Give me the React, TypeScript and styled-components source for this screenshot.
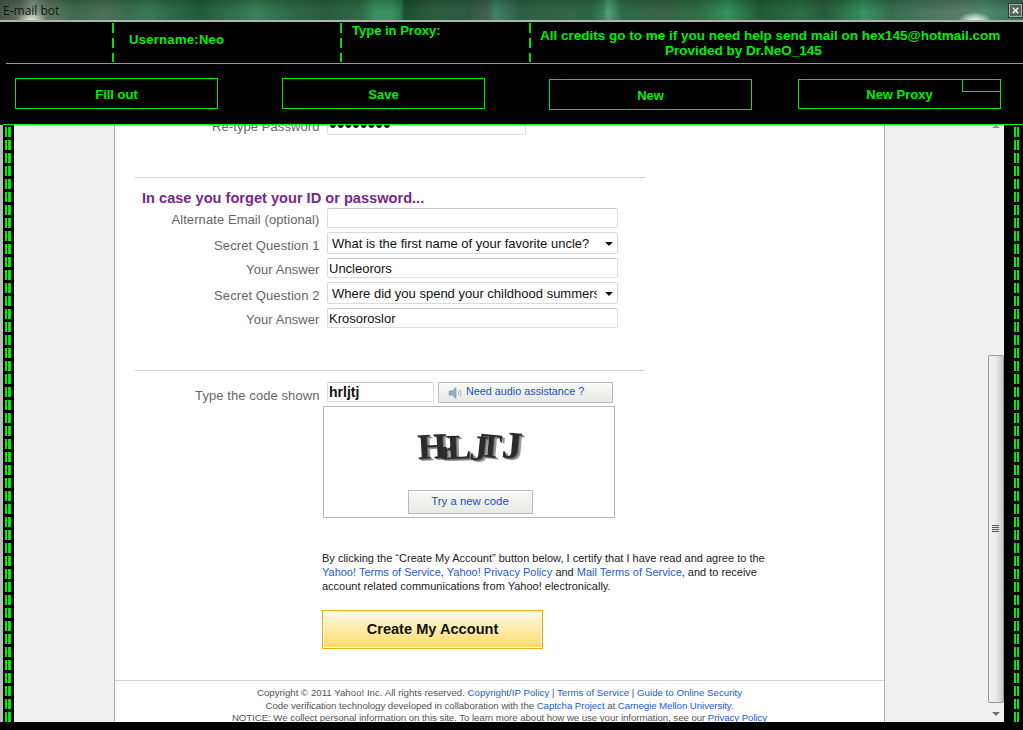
import React from "react";
import styled, { createGlobalStyle } from "styled-components";
import { X } from "lucide-react";

const GlobalStyle = createGlobalStyle`
  html, body {
    margin: 0;
    padding: 0;
    background: #000;
  }
  * {
    box-sizing: border-box;
  }
`;

const green = "#00f000";

const Frame = styled.div`
  width: 1023px;
  height: 730px;
  display: flex;
  flex-direction: column;
  overflow: hidden;
  background: #000;
  font-family: "Liberation Sans", Arial, sans-serif;
`;

const TitleBar = styled.div`
  height: 22px;
  flex: none;
  display: flex;
  align-items: flex-start;
  justify-content: space-between;
  border-bottom: 2px solid #a9b8ad;
  background:
    radial-gradient(ellipse 16px 9px at 31px 20px, rgba(255, 255, 255, 0.75), transparent),
    radial-gradient(ellipse 17px 9px at 975px 21px, #fff, rgba(255, 255, 255, 0.5) 55%, transparent),
    linear-gradient(to bottom, rgba(10, 40, 25, 0.28), transparent 55%),
    linear-gradient(
      to right,
      #4a5448 0,
      #5d6b5e 20px,
      #8a9a8c 32px,
      #5e7664 48px,
      #3f6a4c 75px,
      #4d7058 105px,
      #3c6c50 128px,
      #367a58 150px,
      #2d6a49 170px,
      #215c3b 200px,
      #2f7050 232px,
      #3a8059 256px,
      #2f6c4c 285px,
      #2c5a40 325px,
      #2f6a45 360px,
      #3a9062 375px,
      #389060 392px,
      #2e7d55 400px,
      #1d4d30 405px,
      #2c5c40 430px,
      #2f5a42 470px,
      #44604e 488px,
      #43806a 495px,
      #2e5f44 520px,
      #356548 570px,
      #2a6344 590px,
      #358058 603px,
      #52a07a 608px,
      #2f6a48 622px,
      #3a6248 665px,
      #2d6f46 700px,
      #359060 728px,
      #1f5c38 760px,
      #2c6d48 800px,
      #2a5a3c 825px,
      #2f8a5c 860px,
      #3a9265 862px,
      #346f50 890px,
      #4c7560 925px,
      #5a7d68 960px,
      #4c8a6c 985px,
      #3c6e54 1023px
    );
`;

const TitleText = styled.span`
  padding: 3px 0 0 3px;
  font-family: "Open Sans", sans-serif;
  font-size: 12px;
  line-height: 15px;
  color: #10180f;
`;

const CloseButton = styled.div`
  width: 15px;
  height: 15px;
  margin-top: 3px;
  display: flex;
  align-items: center;
  justify-content: center;
  background: #54665a;
  border: 1px solid #2c3a30;
  box-shadow: inset 0 0 0 1px #a6b4aa;
  color: #fff;
`;

const Header = styled.header`
  flex: none;
  height: 103px;
  margin-left: 3px;
  display: flex;
  flex-direction: column;
  background: #000;
  border-bottom: 1px solid #00ff00;
`;

const InfoRow = styled.div`
  height: 42px;
  flex: none;
  margin-left: 3px;
  display: flex;
  border-bottom: 1px solid #00ff00;
`;

const InfoCell = styled.div<{ $width: number; $divided?: boolean }>`
  width: ${(p) => p.$width}px;
  height: 40px;
  flex: none;
  color: ${green};
  font-size: 13px;
  font-weight: bold;
  line-height: 15px;
  background-image: ${(p) =>
    p.$divided
      ? "repeating-linear-gradient(to bottom, #00e000 0 10px, transparent 10px 15px)"
      : "none"};
  background-size: 2px 100%;
  background-repeat: no-repeat;
  background-position: 0 1px;
`;

const Username = styled.div`
  padding: 10px 0 0 17px;
  letter-spacing: 0.3px;
`;

const ProxyLabel = styled.div`
  padding: 1px 0 0 12px;
`;

const Credits = styled.div`
  padding: 6px 0 0 11px;
  white-space: nowrap;
  font-size: 13.5px;
`;

const CreditsLine = styled.div<{ $indent?: number }>`
  margin-left: ${(p) => p.$indent ?? 0}px;
`;

const ButtonRow = styled.div`
  display: flex;
  align-items: flex-start;
  padding: 14px 0 0 12px;
`;

const HeaderButton = styled.button<{ $gap?: number; $low?: boolean }>`
  position: relative;
  width: 203px;
  height: 31px;
  padding: 2px 0 0;
  margin-left: ${(p) => p.$gap ?? 0}px;
  margin-top: ${(p) => (p.$low ? 1 : 0)}px;
  background: #000;
  border: 1px solid #00e800;
  color: ${green};
  font-family: inherit;
  font-size: 13px;
  font-weight: bold;
`;

const ProxyButton = styled(HeaderButton)`
  height: 30px;
  padding: 0;
`;

const ButtonTab = styled.span`
  position: absolute;
  top: 0;
  right: 0;
  width: 38px;
  height: 12px;
  border-left: 1px solid #00e800;
  border-bottom: 1px solid #00e800;
`;

const Workspace = styled.div`
  height: 597px;
  flex: none;
  display: flex;
`;

const Rail = styled.div<{ $width: number; $inset: number; $edge?: boolean }>`
  width: ${(p) => p.$width}px;
  flex: none;
  display: flex;
  gap: 1px;
  padding-left: ${(p) => p.$inset}px;
  background: #000;
  border-left: ${(p) => (p.$edge ? "3px solid #b4bfb6" : "none")};
`;

const RailBar = styled.div<{ $width: number }>`
  width: ${(p) => p.$width}px;
  background-image: repeating-linear-gradient(
    to bottom,
    transparent 0 2px,
    #00ee00 2px 12px,
    transparent 12px 13px
  );
`;

const Page = styled.div`
  flex: 1;
  min-width: 0;
  display: flex;
  background: #f0f0f0;
  overflow: hidden;
  padding-left: 100px;
`;

const Sheet = styled.main`
  width: 771px;
  flex: none;
  background: #fff;
  border-left: 1px solid #b0b0b0;
  border-right: 1px solid #b0b0b0;
  align-self: stretch;
`;

const FormArea = styled.div`
  margin-top: -10px;
  padding-left: 20px;
`;

const Row = styled.div<{ $top?: number }>`
  display: flex;
  margin-top: ${(p) => p.$top ?? 4}px;
`;

const Label = styled.label<{ $drop?: number }>`
  width: 184.5px;
  flex: none;
  margin-right: 7.5px;
  padding-top: ${(p) => p.$drop ?? 4}px;
  text-align: right;
  font-size: 13px;
  line-height: 16px;
  letter-spacing: 0.08px;
  color: #666;
  white-space: nowrap;
`;

const TextInput = styled.input<{ $width?: number; $bold?: boolean; $dots?: boolean }>`
  width: ${(p) => p.$width ?? 291}px;
  height: 20px;
  padding: 0 1px;
  border: 1px solid #dcdde2;
  border-top-color: #c8c8d0;
  border-radius: 2px;
  background: #fff;
  font-family: inherit;
  font-size: ${(p) => (p.$dots ? 22 : p.$bold ? 14 : 13)}px;
  font-weight: ${(p) => (p.$bold ? "bold" : "normal")};
  color: #111;
  outline: none;
`;

const Select = styled.div`
  width: 291px;
  height: 22px;
  display: flex;
  align-items: center;
  padding: 0 4px;
  border: 1px solid #d8d8de;
  border-radius: 2px;
  font-size: 13px;
  color: #111;
`;

const SelectValue = styled.span`
  flex: 1;
  min-width: 0;
  overflow: hidden;
  white-space: nowrap;
`;

const SelectArrow = styled.span`
  flex: none;
  margin: 1px 0 0 8px;
  border-left: 4px solid transparent;
  border-right: 4px solid transparent;
  border-top: 4px solid #111;
`;

const Divider = styled.hr<{ $top: number }>`
  width: 510px;
  height: 1px;
  margin: ${(p) => p.$top}px 0 0;
  border: 0;
  background: #d4d4d4;
`;

const Heading = styled.h3`
  margin: 12px 0 0 7px;
  font-size: 14.6px;
  line-height: 16px;
  font-weight: bold;
  color: #74288a;
`;

const GreyButton = styled.button<{ $width: number; $height: number }>`
  width: ${(p) => p.$width}px;
  height: ${(p) => p.$height}px;
  flex: none;
  display: flex;
  align-items: center;
  padding: 0;
  border: 1px solid #bcbcbc;
  background: linear-gradient(to bottom, #f9f9f7, #e8e8e4);
  font-family: inherit;
  color: #1550c8;
`;

const AudioButton = styled(GreyButton)`
  margin-left: 4px;
  padding-left: 9px;
  gap: 4px;
  font-size: 10.8px;
`;

const AudioLabel = styled.span`
  padding-bottom: 3px;
`;

const CaptchaBox = styled.div`
  width: 292px;
  height: 112px;
  margin: 2px 0 0 188px;
  display: flex;
  flex-direction: column;
  align-items: center;
  border: 1px solid #b8b8b8;
`;

const CaptchaPicture = styled.svg`
  display: block;
  width: 112px;
  height: 38px;
  margin: 23px 0 22px 8px;
`;

const NewCodeButton = styled(GreyButton)`
  justify-content: center;
  margin-left: 2px;
  padding-bottom: 2px;
  font-size: 11.4px;
`;

const Legal = styled.p`
  width: 444px;
  margin: 33px 0 0 187px;
  font-size: 11px;
  line-height: 14px;
  color: #222;
`;

const Link = styled.a`
  color: #1d5ccc;
`;

const CreateButton = styled.button`
  display: block;
  width: 221px;
  height: 39px;
  margin: 17px 0 0 187px;
  padding: 0 0 2px;
  border: 1px solid #f6a81c;
  box-shadow: inset 0 0 0 1px #fff8dc;
  background: linear-gradient(to bottom, #fffbe8, #fcdc66);
  font-family: inherit;
  font-size: 14.6px;
  font-weight: bold;
  color: #111;
`;

const Footer = styled.footer`
  margin-top: 31px;
  padding-top: 6px;
  border-top: 1px solid #d0d0d0;
  text-align: center;
  font-size: 9.7px;
  line-height: 12.5px;
  color: #555;
  white-space: nowrap;
`;

const FooterTight = styled.div`
  letter-spacing: -0.07px;
`;

const Scrollbar = styled.div`
  width: 16px;
  flex: none;
  display: flex;
  flex-direction: column;
  align-items: center;
  background: #f0f0f0;
`;

const ArrowUp = styled.span`
  flex: none;
  border-left: 4px solid transparent;
  border-right: 4px solid transparent;
  border-bottom: 3px solid #909090;
`;

const ScrollThumb = styled.div`
  width: 16px;
  height: 348px;
  margin-top: 227px;
  flex: none;
  display: flex;
  align-items: center;
  justify-content: center;
  border: 1px solid #9a9a9a;
  border-radius: 2px;
  background: linear-gradient(to right, #f2f2f2 0, #ececec 45%, #c8c8c8 100%);
`;

const Grip = styled.span`
  width: 7px;
  height: 8px;
  margin-left: -2px;
  background-image: repeating-linear-gradient(to bottom, #555 0 1px, #e8e8e8 1px 2px);
`;

const ArrowDown = styled.span`
  flex: none;
  margin-top: 9px;
  border-left: 4px solid transparent;
  border-right: 4px solid transparent;
  border-top: 4px solid #707070;
`;

const SpeakerIcon = () => (
  <svg width="14" height="14" viewBox="0 0 14 14" fill="none">
    <path d="M1 5h3l4-3.5v11L4 9H1z" fill="#8fb0c8" stroke="#7b98ae" strokeWidth="0.6" />
    <path d="M10 5c.8 1.2.8 2.8 0 4M11.8 3.5c1.5 2 1.5 5 0 7" stroke="#9ab4c6" strokeWidth="1" />
  </svg>
);

// warped captcha letters: x, baseline, horizontal stretch, font size, tilt
const captchaLetters = [
  { ch: "H", x: 1, y: 29, sx: 1.05, size: 36, tilt: -3 },
  { ch: "r", x: 24, y: 29, sx: 1, size: 26, tilt: 0 },
  { ch: "L", x: 30, y: 29, sx: 1.05, size: 35, tilt: -2 },
  { ch: "J", x: 52, y: 29, sx: 1, size: 36, tilt: 6 },
  { ch: "T", x: 62, y: 26, sx: 0.95, size: 34, tilt: 5 },
  { ch: "J", x: 84, y: 27, sx: 1.05, size: 38, tilt: 5 },
];

const CaptchaLetters = ({ dx, dy, fill }: { dx: number; dy: number; fill: string }) => (
  <g fill={fill} transform={`translate(${dx} ${dy})`}>
    {captchaLetters.map((l, i) => (
      <text
        key={i}
        fontSize={l.size}
        transform={`translate(${l.x} ${l.y}) rotate(${l.tilt}) scale(${l.sx} 1)`}
      >
        {l.ch}
      </text>
    ))}
  </g>
);

const Captcha = () => (
  <CaptchaPicture viewBox="0 0 112 38">
    <g fontFamily="'Liberation Serif', serif" fontWeight="bold" style={{ filter: "blur(0.4px)" }}>
      <CaptchaLetters dx={3} dy={2} fill="#9a9a9a" />
      <CaptchaLetters dx={1} dy={1} fill="#666" />
      <CaptchaLetters dx={0} dy={0} fill="#2b2b2b" />
    </g>
  </CaptchaPicture>
);

function App() {
  return (
    <Frame>
      <GlobalStyle />
      <TitleBar>
        <TitleText>E-mail bot</TitleText>
        <CloseButton>
          <X size={9} strokeWidth={4} />
        </CloseButton>
      </TitleBar>

      <Header>
        <InfoRow>
          <InfoCell $width={106} />
          <InfoCell $width={228} $divided>
            <Username>Username:Neo</Username>
          </InfoCell>
          <InfoCell $width={189} $divided>
            <ProxyLabel>Type in Proxy:</ProxyLabel>
          </InfoCell>
          <InfoCell $width={490} $divided>
            <Credits>
              <CreditsLine>All credits go to me if you need help send mail on hex145@hotmail.com</CreditsLine>
              <CreditsLine $indent={125}>Provided by Dr.NeO_145</CreditsLine>
            </Credits>
          </InfoCell>
        </InfoRow>
        <ButtonRow>
          <HeaderButton>Fill out</HeaderButton>
          <HeaderButton $gap={64}>Save</HeaderButton>
          <HeaderButton $gap={64} $low>
            New
          </HeaderButton>
          <ProxyButton $gap={46} $low>
            New Proxy
            <ButtonTab />
          </ProxyButton>
        </ButtonRow>
      </Header>

      <Workspace>
        <Rail $width={14} $inset={2} $edge>
          <RailBar $width={2} />
          <RailBar $width={3} />
        </Rail>

        <Page>
          <Sheet>
            <FormArea>
              <Row $top={0}>
                <Label>Re-type Password</Label>
                <TextInput $width={199} $dots type="password" value="xxxxxxxx" readOnly />
              </Row>

              <Divider $top={42} />
              <Heading>In case you forget your ID or password...</Heading>
              <Row $top={2}>
                <Label>Alternate Email (optional)</Label>
                <TextInput readOnly value="" />
              </Row>
              <Row>
                <Label $drop={6}>Secret Question 1</Label>
                <Select>
                  <SelectValue>What is the first name of your favorite uncle?</SelectValue>
                  <SelectArrow />
                </Select>
              </Row>
              <Row>
                <Label>Your Answer</Label>
                <TextInput readOnly value="Uncleorors" />
              </Row>
              <Row>
                <Label $drop={6}>Secret Question 2</Label>
                <Select>
                  <SelectValue>Where did you spend your childhood summers?</SelectValue>
                  <SelectArrow />
                </Select>
              </Row>
              <Row>
                <Label>Your Answer</Label>
                <TextInput readOnly value="Krosoroslor" />
              </Row>

              <Divider $top={42} />
              <Row $top={11}>
                <Label $drop={6}>Type the code shown</Label>
                <TextInput $width={107} $bold readOnly value="hrljtj" />
                <AudioButton $width={175} $height={21}>
                  <SpeakerIcon />
                  <AudioLabel>Need audio assistance ?</AudioLabel>
                </AudioButton>
              </Row>
              <CaptchaBox>
                <Captcha />
                <NewCodeButton $width={125} $height={24}>
                  Try a new code
                </NewCodeButton>
              </CaptchaBox>

              <Legal>
                By clicking the “Create My Account” button below, I certify that I have read and agree to the{" "}
                <Link>Yahoo! Terms of Service</Link>, <Link>Yahoo! Privacy Policy</Link> and{" "}
                <Link>Mail Terms of Service</Link>, and to receive account related communications from Yahoo!
                electronically.
              </Legal>
              <CreateButton>Create My Account</CreateButton>
            </FormArea>

            <Footer>
              Copyright © 2011 Yahoo! Inc. All rights reserved. <Link>Copyright/IP Policy</Link> |{" "}
              <Link>Terms of Service</Link> | <Link>Guide to Online Security</Link>
              <FooterTight>
                Code verification technology developed in collaboration with the <Link>Captcha Project</Link> at{" "}
                <Link>Carnegie Mellon University</Link>.
              </FooterTight>
              <FooterTight>
                NOTICE: We collect personal information on this site. To learn more about how we use your information,
                see our <Link>Privacy Policy</Link>
              </FooterTight>
            </Footer>
          </Sheet>
        </Page>

        <Scrollbar>
          <ArrowUp />
          <ScrollThumb>
            <Grip />
          </ScrollThumb>
          <ArrowDown />
        </Scrollbar>

        <Rail $width={19} $inset={10}>
          <RailBar $width={2} />
          <RailBar $width={2} />
        </Rail>
      </Workspace>
    </Frame>
  );
}

export default App;
